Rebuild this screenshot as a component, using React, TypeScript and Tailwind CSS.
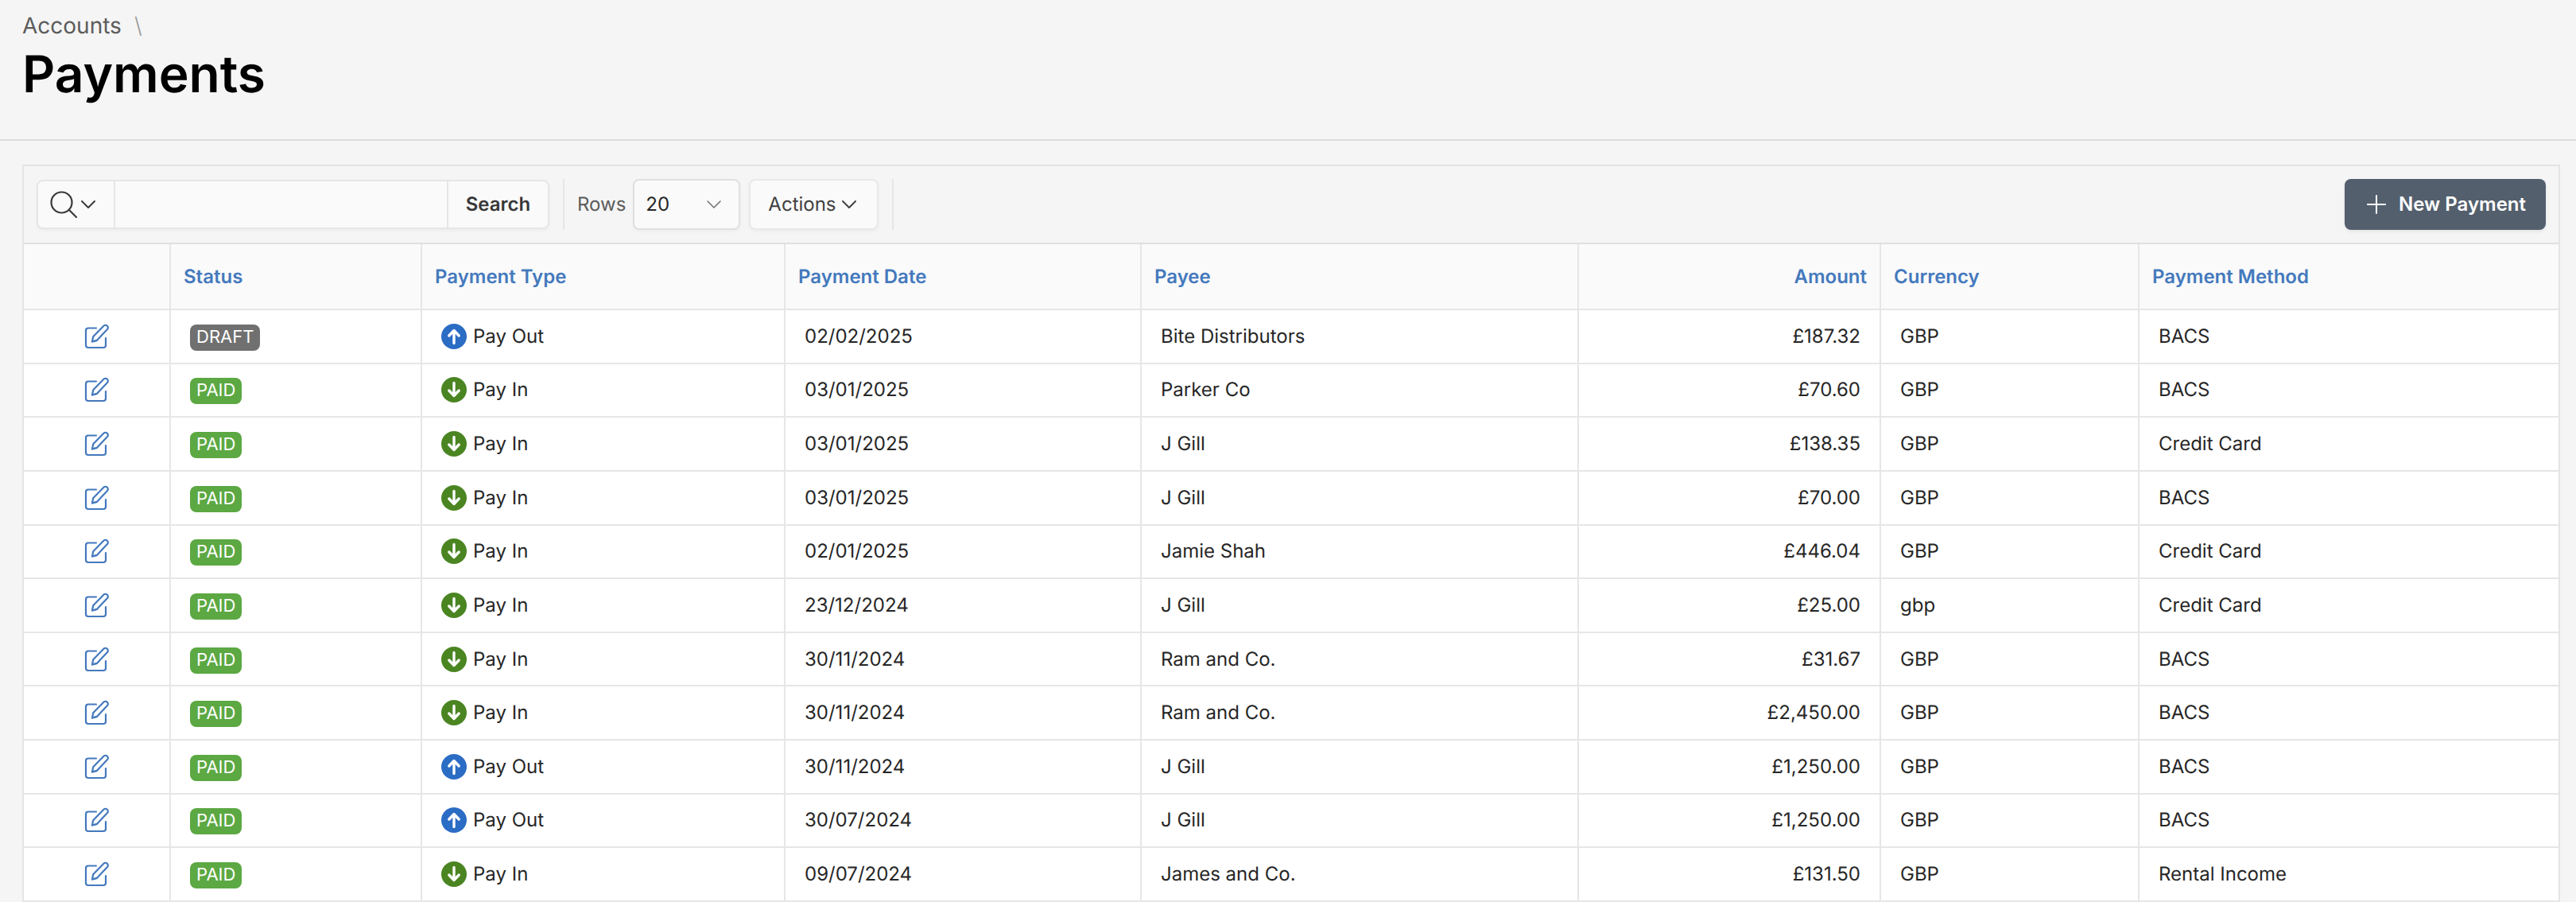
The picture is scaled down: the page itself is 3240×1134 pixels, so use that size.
import { ChevronDown, Plus } from "lucide-react";

type Payment = {
  status: "DRAFT" | "PAID";
  type: "Pay Out" | "Pay In";
  date: string;
  payee: string;
  amount: string;
  currency: string;
  method: string;
};

const payments: Payment[] = [
  { status: "DRAFT", type: "Pay Out", date: "02/02/2025", payee: "Bite Distributors", amount: "£187.32", currency: "GBP", method: "BACS" },
  { status: "PAID", type: "Pay In", date: "03/01/2025", payee: "Parker Co", amount: "£70.60", currency: "GBP", method: "BACS" },
  { status: "PAID", type: "Pay In", date: "03/01/2025", payee: "J Gill", amount: "£138.35", currency: "GBP", method: "Credit Card" },
  { status: "PAID", type: "Pay In", date: "03/01/2025", payee: "J Gill", amount: "£70.00", currency: "GBP", method: "BACS" },
  { status: "PAID", type: "Pay In", date: "02/01/2025", payee: "Jamie Shah", amount: "£446.04", currency: "GBP", method: "Credit Card" },
  { status: "PAID", type: "Pay In", date: "23/12/2024", payee: "J Gill", amount: "£25.00", currency: "gbp", method: "Credit Card" },
  { status: "PAID", type: "Pay In", date: "30/11/2024", payee: "Ram and Co.", amount: "£31.67", currency: "GBP", method: "BACS" },
  { status: "PAID", type: "Pay In", date: "30/11/2024", payee: "Ram and Co.", amount: "£2,450.00", currency: "GBP", method: "BACS" },
  { status: "PAID", type: "Pay Out", date: "30/11/2024", payee: "J Gill", amount: "£1,250.00", currency: "GBP", method: "BACS" },
  { status: "PAID", type: "Pay Out", date: "30/07/2024", payee: "J Gill", amount: "£1,250.00", currency: "GBP", method: "BACS" },
  { status: "PAID", type: "Pay In", date: "09/07/2024", payee: "James and Co.", amount: "£131.50", currency: "GBP", method: "Rental Income" },
];

const EditIcon = () => (
  <svg width="32" height="32" viewBox="0 0 32 32" fill="none" stroke="#4479bd" strokeWidth="2.2" strokeLinecap="round" strokeLinejoin="round">
    <path d="M15 5.5H5a3 3 0 0 0-3 3V27a3 3 0 0 0 3 3h19a3 3 0 0 0 3-3v-9" />
    <path d="M10 22.5l1.2-6.2L24.6 2.6a2.8 2.8 0 0 1 4 0l.4.4a2.8 2.8 0 0 1 0 4L15.8 21z" />
    <path d="M10 22.5l5.8-1.5" />
  </svg>
);

const PayIcon = ({ type }: { type: Payment["type"] }) => (
  <svg width="32" height="32" viewBox="0 0 32 32" className="shrink-0">
    <circle cx="16" cy="16" r="16" fill={type === "Pay Out" ? "#2b6cc4" : "#4a8522"} />
    {type === "Pay Out" ? (
      <path d="M16 24.5V9M9.8 15L16 8.5l6.2 6.5" fill="none" stroke="#fff" strokeWidth="3.4" strokeLinecap="round" strokeLinejoin="round" />
    ) : (
      <path d="M16 7.5V23M9.8 17l6.2 6.5 6.2-6.5" fill="none" stroke="#fff" strokeWidth="3.4" strokeLinecap="round" strokeLinejoin="round" />
    )}
  </svg>
);

export default function App() {
  return (
    <div className="h-[1134px] overflow-hidden bg-[#f5f5f5] font-['Inter',sans-serif] text-[#262626] [text-rendering:geometricPrecision]">
      <div className="h-[177px] border-b-2 border-[#dcdcdc] pl-[28px] pt-[16px]">
        <div className="flex h-[32px] items-center text-[28px] leading-[32px] text-[#5c5c5c]">
          Accounts
          <span className="ml-[16px] font-light text-[#9a9a9a]">\</span>
        </div>
        <h1 className="mt-[6px] text-[64px] font-semibold leading-[80px] text-black">Payments</h1>
      </div>

      <div className="ml-[28px] mr-[20px] mt-[30px] border-x-2 border-t-2 border-[#e4e4e4]">
        <div className="flex h-[98px] items-center border-b-2 border-[#e0e0e0] pl-[16px] pr-[16px]">
          <div className="flex h-[62px] w-[645px] rounded-[8px] border-2 border-[#e6e6e6] bg-[#fafafa] shadow-[0_2px_4px_rgba(0,0,0,0.04)]">
            <div className="flex w-[97px] items-center border-r-2 border-[#e6e6e6] pl-[14px]">
              <svg width="36" height="36" viewBox="0 0 36 36" fill="none" stroke="#3a3a3a" strokeWidth="2.2" strokeLinecap="round" className="shrink-0">
                <circle cx="15.5" cy="15.5" r="13" />
                <path d="M25 25l9 9" />
              </svg>
              <ChevronDown size={32} strokeWidth={1.5} color="#3a3a3a" className="-ml-[3px] shrink-0" />
            </div>
            <div className="w-[419px] border-r-2 border-[#e6e6e6]" />
            <div className="flex flex-1 items-center justify-center text-[24px] font-semibold text-[#383838]">Search</div>
          </div>
          <div className="ml-[17px] h-[64px] w-[2px] bg-[#e6e6e6]" />
          <span className="ml-[16px] text-[24px] text-[#5c5c5c]">Rows</span>
          <div className="ml-[9px] flex h-[64px] w-[135px] items-center justify-between rounded-[8px] border-2 border-[#e0e0e0] bg-[#fafafa] pl-[14px] pr-[15px] text-[24px] shadow-[0_2px_4px_rgba(0,0,0,0.04)]">
            20
            <ChevronDown size={32} strokeWidth={1.1} color="#6e6e6e" />
          </div>
          <div className="ml-[11px] flex h-[64px] w-[163px] items-center rounded-[8px] border-2 border-[#e8e8e8] bg-[#fafafa] pl-[22px] text-[24px] text-[#404040] shadow-[0_2px_4px_rgba(0,0,0,0.04)]">
            Actions
            <ChevronDown size={32} strokeWidth={1.5} color="#404040" className="shrink-0" />
          </div>
          <div className="ml-[17px] h-[64px] w-[2px] bg-[#e6e6e6]" />
          <button className="ml-auto flex h-[64px] w-[253px] items-center gap-[9px] rounded-[8px] bg-[#535f6d] pl-[21px] text-[24px] font-semibold text-white shadow-[0_2px_4px_rgba(0,0,0,0.08)]">
            <Plus size={38} strokeWidth={1.3} />
            New Payment
          </button>
        </div>

        <table className="w-full table-fixed border-collapse text-[24px]">
          <colgroup>
            <col className="w-[184px]" />
            <col className="w-[316px]" />
            <col className="w-[457px]" />
            <col className="w-[448px]" />
            <col className="w-[550px]" />
            <col className="w-[380px]" />
            <col className="w-[325px]" />
            <col />
          </colgroup>
          <thead>
            <tr className="h-[82px] bg-[#fafafa] text-left font-semibold text-[#4479bd]">
              <th className="border-b-2 border-[#e6e6e6]" />
              <th className="border-b-2 border-l-2 border-[#e6e6e6] pl-[16px] font-semibold">Status</th>
              <th className="border-b-2 border-l-2 border-[#e6e6e6] pl-[16px] font-semibold">Payment Type</th>
              <th className="border-b-2 border-l-2 border-[#e6e6e6] pl-[16px] font-semibold">Payment Date</th>
              <th className="border-b-2 border-l-2 border-[#e6e6e6] pl-[16px] font-semibold">Payee</th>
              <th className="border-b-2 border-l-2 border-[#e6e6e6] pr-[16px] text-right font-semibold">Amount</th>
              <th className="border-b-2 border-l-2 border-[#e6e6e6] pl-[16px] font-semibold">Currency</th>
              <th className="border-b-2 border-l-2 border-[#e6e6e6] pl-[16px] font-semibold">Payment Method</th>
            </tr>
          </thead>
          <tbody className="bg-white">
            {payments.map((p, i) => (
              <tr key={i} className="h-[67.64px]">
                <td className="border-b-2 border-[#e6e6e6]">
                  <div className="flex justify-center"><EditIcon /></div>
                </td>
                <td className="border-b-2 border-l-2 border-[#e6e6e6] pl-[24px]">
                  <span className={`inline-block h-[33px] rounded-[8px] px-[8px] text-[22px] leading-[33px] text-white ${p.status === "DRAFT" ? "bg-[#707070]" : "bg-[#5ca843]"}`}>
                    {p.status}
                  </span>
                </td>
                <td className="border-b-2 border-l-2 border-[#e6e6e6] pl-[24px]">
                  <div className="flex items-center gap-[8px]">
                    <PayIcon type={p.type} />
                    {p.type}
                  </div>
                </td>
                <td className="border-b-2 border-l-2 border-[#e6e6e6] pl-[24px]">{p.date}</td>
                <td className="border-b-2 border-l-2 border-[#e6e6e6] pl-[24px]">{p.payee}</td>
                <td className="border-b-2 border-l-2 border-[#e6e6e6] pr-[24px] text-right">{p.amount}</td>
                <td className="border-b-2 border-l-2 border-[#e6e6e6] pl-[24px]">{p.currency}</td>
                <td className="border-b-2 border-l-2 border-[#e6e6e6] pl-[24px]">{p.method}</td>
              </tr>
            ))}
          </tbody>
        </table>
      </div>
    </div>
  );
}
